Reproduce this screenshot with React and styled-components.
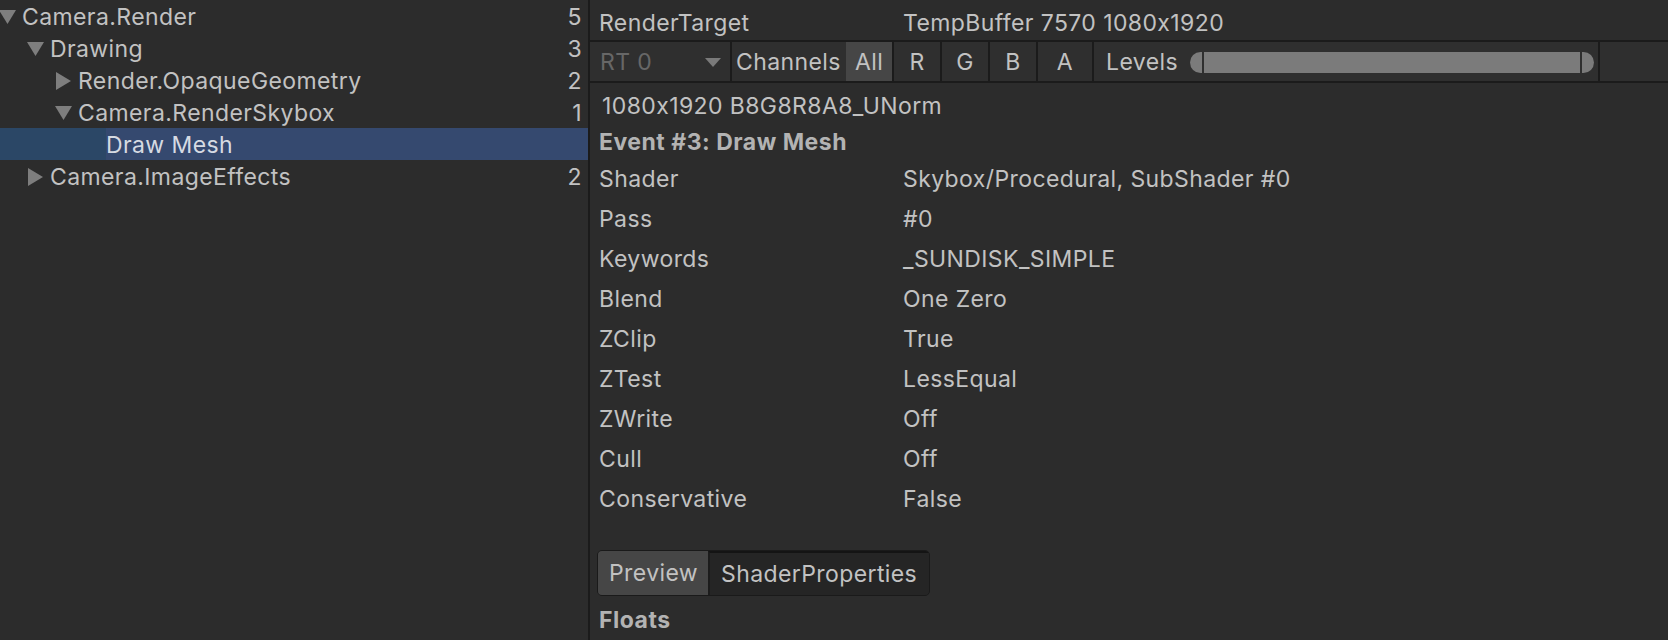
import React from "react";
import styled, { createGlobalStyle } from "styled-components";

const GlobalStyle = createGlobalStyle`
  html, body { margin: 0; padding: 0; background: #2c2c2c; }
  body {
    font-family: Inter, "Noto Sans", sans-serif;
    color: #c2c2c2;
    font-feature-settings: "calt" 0;
  }
  * { box-sizing: border-box; }
`;

const DARK_LINE = "#1b1b1b";

const Root = styled.div`
  display: grid;
  grid-template-columns: 588px 2px 1fr;
  width: 1668px;
  height: 640px;
  overflow: hidden;
  background: #2c2c2c;
  font-size: 23px;
  letter-spacing: 0.4px;
`;

const TreePanel = styled.div`
  display: flex;
  flex-direction: column;
`;

const Divider = styled.div`
  background: ${DARK_LINE};
`;

const TreeRow = styled.div`
  display: flex;
  align-items: center;
  height: 32px;
  padding-top: 2px;
  padding-left: ${(p) => p.$depth * 28}px;
  padding-right: 6px;
  white-space: nowrap;
  background: ${(p) =>
    p.$selected
      ? `linear-gradient(to right, #2b4766 0 ${p.$depth * 28 + 22}px, #35496f ${p.$depth * 28 + 22}px)`
      : "transparent"};
  color: ${(p) => (p.$selected ? "#d6dae2" : "#c2c2c2")};
`;

const Toggle = styled.span`
  display: flex;
  align-items: center;
  justify-content: flex-start;
  width: 22px;
  height: 30px;
  flex: none;
`;

const TreeLabel = styled.span`
  flex: 1;
`;

const Count = styled.span`
  margin-left: auto;
`;

const Arrow = ({ open }) =>
  open ? (
    <svg width="17" height="14" viewBox="0 0 17 14" style={{ marginLeft: -1 }}>
      <polygon points="0,0 17,0 8.5,14" fill="#7e7e7e" />
    </svg>
  ) : (
    <svg width="15" height="18" viewBox="0 0 15 18">
      <polygon points="0,0 15,9 0,18" fill="#7e7e7e" />
    </svg>
  );

const Inspector = styled.div`
  display: flex;
  flex-direction: column;
  min-width: 0;
`;

const HeaderRow = styled.div`
  display: grid;
  grid-template-columns: 304px 1fr;
  align-items: center;
  height: 42px;
  padding-left: 9px;
  padding-top: 5px;
  border-bottom: 2px solid ${DARK_LINE};
`;

const Toolbar = styled.div`
  display: flex;
  height: 41px;
  border-bottom: 2px solid ${DARK_LINE};
  background: #2f2f2f;
`;

const Cell = styled.div`
  display: flex;
  align-items: center;
  justify-content: ${(p) => (p.$center ? "center" : "flex-start")};
  width: ${(p) => p.$w}px;
  flex: none;
  height: 100%;
  border-right: ${(p) => (p.$sep ? `2px solid ${DARK_LINE}` : "none")};
  background: ${(p) => (p.$active ? "#464646" : "transparent")};
  padding: ${(p) => p.$pad || "0"};
  padding-top: 1px;
  color: ${(p) => (p.$dim ? "#676767" : "#c2c2c2")};
`;

const DropArrow = styled.span`
  margin-left: auto;
  margin-right: 9px;
  width: 0;
  height: 0;
  border-left: 8px solid transparent;
  border-right: 8px solid transparent;
  border-top: 9px solid #7a7a7a;
`;

const LevelsLabel = styled.span`
  width: 84px;
  flex: none;
`;

const Slider = styled.div`
  display: flex;
  align-items: stretch;
  height: 21px;
  flex: 1;
  margin-right: 4px;
`;

const Cap = styled.div`
  width: 12px;
  background: #7b7b7b;
  border-radius: ${(p) => (p.$left ? "11px 0 0 11px" : "0 11px 11px 0")};
`;

const Handle = styled.div`
  width: 2px;
  background: #2f2f2f;
`;

const Track = styled.div`
  flex: 1;
  background: #7b7b7b;
`;

const Body = styled.div`
  display: flex;
  flex-direction: column;
  padding-top: 3px;
`;

const InfoRow = styled.div`
  display: flex;
  align-items: center;
  height: 37px;
  padding-left: 12px;
  padding-top: 2px;
`;

const SectionTitle = styled.div`
  display: flex;
  align-items: center;
  height: ${(p) => p.$h}px;
  padding-left: 9px;
  padding-top: 2px;
  font-weight: 700;
  color: #b3b3b3;
  letter-spacing: 0.5px;
`;

const PropRow = styled.div`
  display: grid;
  grid-template-columns: 304px 1fr;
  align-items: center;
  height: 40px;
  padding-left: 9px;
`;

const Tabs = styled.div`
  display: flex;
  align-self: flex-start;
  height: 46px;
  margin: 31px 0 0 7px;
  border: 1px solid #1a1a1a;
  border-radius: 5px;
  overflow: hidden;
  background: #252525;
`;

const Tab = styled.div`
  display: flex;
  align-items: center;
  padding: 0 ${(p) => p.$padR}px 0 ${(p) => p.$padL}px;
  background: ${(p) => (p.$active ? "#464646" : "#252525")};
  border-top: ${(p) => (p.$active ? "none" : "2px solid #141414")};
  border-left: ${(p) => (p.$active ? "none" : "2px solid #1c1c1c")};
  color: #c2c2c2;
`;

const tree = [
  { label: "Camera.Render", depth: 0, open: true, count: 5 },
  { label: "Drawing", depth: 1, open: true, count: 3 },
  { label: "Render.OpaqueGeometry", depth: 2, open: false, count: 2 },
  { label: "Camera.RenderSkybox", depth: 2, open: true, count: 1 },
  { label: "Draw Mesh", depth: 3, leaf: true, selected: true },
  { label: "Camera.ImageEffects", depth: 1, open: false, count: 2 },
];

const props = [
  ["Shader", "Skybox/Procedural, SubShader #0"],
  ["Pass", "#0"],
  ["Keywords", "_SUNDISK_SIMPLE"],
  ["Blend", "One Zero"],
  ["ZClip", "True"],
  ["ZTest", "LessEqual"],
  ["ZWrite", "Off"],
  ["Cull", "Off"],
  ["Conservative", "False"],
];

export default function App() {
  return (
    <>
      <GlobalStyle />
      <Root>
        <TreePanel>
          {tree.map((n) => (
            <TreeRow key={n.label} $depth={n.depth} $selected={n.selected}>
              <Toggle>{!n.leaf && <Arrow open={n.open} />}</Toggle>
              <TreeLabel>{n.label}</TreeLabel>
              {n.count != null && <Count>{n.count}</Count>}
            </TreeRow>
          ))}
        </TreePanel>
        <Divider />
        <Inspector>
          <HeaderRow>
            <span>RenderTarget</span>
            <span>TempBuffer 7570 1080x1920</span>
          </HeaderRow>
          <Toolbar>
            <Cell $w={142} $sep $dim $pad="0 0 0 10px">
              RT 0
              <DropArrow />
            </Cell>
            <Cell $w={114} $pad="0 0 0 4px">Channels</Cell>
            <Cell $w={48} $sep $center $active>All</Cell>
            <Cell $w={48} $sep $center>R</Cell>
            <Cell $w={48} $sep $center>G</Cell>
            <Cell $w={48} $sep $center>B</Cell>
            <Cell $w={56} $sep $center>A</Cell>
            <Cell $w={506} $sep $pad="0 0 0 12px">
              <LevelsLabel>Levels</LevelsLabel>
              <Slider>
                <Cap $left />
                <Handle />
                <Track />
                <Handle />
                <Cap />
              </Slider>
            </Cell>
          </Toolbar>
          <Body>
            <InfoRow>1080x1920 B8G8R8A8_UNorm</InfoRow>
            <SectionTitle $h={36}>Event #3: Draw Mesh</SectionTitle>
            {props.map(([k, v]) => (
              <PropRow key={k}>
                <span>{k}</span>
                <span>{v}</span>
              </PropRow>
            ))}
            <Tabs>
              <Tab $active $padL={11} $padR={10}>Preview</Tab>
              <Tab $padL={11} $padR={12}>ShaderProperties</Tab>
            </Tabs>
            <SectionTitle $h={46}>Floats</SectionTitle>
          </Body>
        </Inspector>
      </Root>
    </>
  );
}
